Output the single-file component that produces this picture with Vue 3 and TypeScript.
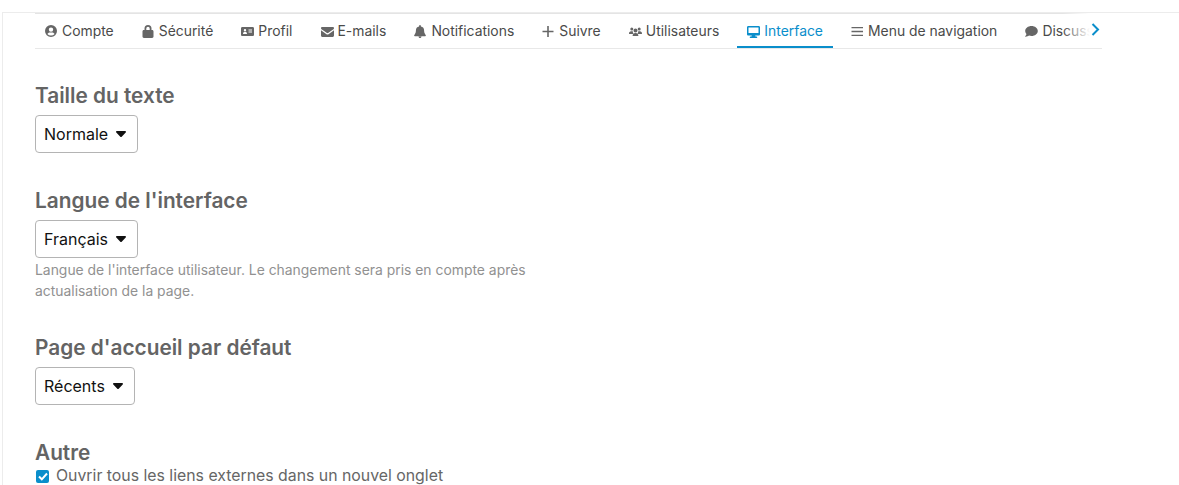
<script setup lang="ts">
const tabs = [
  { label: 'Compte', icon: 'user' },
  { label: 'Sécurité', icon: 'lock' },
  { label: 'Profil', icon: 'card' },
  { label: 'E-mails', icon: 'mail' },
  { label: 'Notifications', icon: 'bell' },
  { label: 'Suivre', icon: 'plus' },
  { label: 'Utilisateurs', icon: 'users' },
  { label: 'Interface', icon: 'desktop', active: true },
  { label: 'Menu de navigation', icon: 'bars' },
  { label: 'Discussions', icon: 'chat' },
]
const icons: Record<string, string> = {
  user: 'M6 0a6 6 0 1 0 0 12A6 6 0 0 0 6 0zm0 2.400a2.200 2.200 0 1 1 0 4.400 2.200 2.200 0 0 1 0-4.400zm0 8.200a4.700 4.700 0 0 1-3.600-1.700c.5-.9 1.400-1.500 2.400-1.500h2.400c1 0 1.900.6 2.400 1.500A4.700 4.700 0 0 1 6 10.600z',
  lock: 'M2.500 5V3.500a3.500 3.500 0 0 1 7 0V5h.6c.8 0 1.400.6 1.400 1.400v5.200c0 .8-.6 1.400-1.400 1.400H1.900C1.100 13 .5 12.400.5 11.600V6.400C.5 5.600 1.100 5 1.900 5h.6zm1.800 0h3.400V3.500a1.700 1.700 0 0 0-3.400 0V5z',
  card: 'M1.300 2h10.400c.7 0 1.300.6 1.300 1.300v6.400c0 .7-.6 1.300-1.300 1.300H1.300C.6 11 0 10.400 0 9.700V3.300C0 2.600.6 2 1.300 2zm2.700 2a1.200 1.200 0 1 0 0 2.400A1.200 1.200 0 0 0 4 4zM2 8.600c0 .2.100.4.300.4h3.400c.2 0 .3-.2.300-.4 0-.8-.7-1.500-1.500-1.500h-1C2.700 7.100 2 7.800 2 8.600zM7.500 4.500v1H11v-1H7.500zm0 2v1H11v-1H7.500z',
  mail: 'M1.200 2h10.600C12.500 2 13 2.500 13 3.200c0 .4-.2.800-.5 1L7 8.100c-.3.200-.7.200-1 0L.5 4.200C.2 4 0 3.600 0 3.200 0 2.500.5 2 1.200 2zM0 5.300l5.500 3.900c.6.400 1.400.400 2 0L13 5.300v5.200c0 .8-.7 1.500-1.500 1.500h-10C.7 12 0 11.300 0 10.500V5.300z',
  bell: 'M6 0c.5 0 .9.400.9.900v.6a4 4 0 0 1 3.200 3.900v.7c0 1.300.4 2.500 1.200 3.500l.4.500c.2.200.2.500.1.700-.1.300-.3.400-.6.400H.8c-.3 0-.5-.1-.6-.4-.1-.2-.1-.5.100-.7l.4-.5c.8-1 1.200-2.200 1.200-3.500v-.7A4 4 0 0 1 5.100 1.500V.9c0-.5.400-.9.900-.9zM4.500 11.500h3c0 .8-.7 1.500-1.500 1.500s-1.500-.7-1.500-1.500z',
  plus: 'M5.200 1h1.600v4.700h4.700v1.600H6.800V12H5.200V7.300H.5V5.700h4.700z',
  users: 'M2.800 2.500a1.500 1.500 0 1 1 0 3 1.500 1.500 0 0 1 0-3zm7.400 0a1.500 1.500 0 1 1 0 3 1.500 1.500 0 0 1 0-3zM6.500 3.500a2 2 0 1 1 0 4 2 2 0 0 1 0-4zM0 8.400C0 7.300.9 6.300 2.100 6.300h1c.3 0 .6.100.8.200A3 3 0 0 0 4.600 9H.4C.2 9 0 8.800 0 8.400zm8.400.6a3 3 0 0 0 .7-2.500c.3-.1.500-.2.800-.2h1c1.200 0 2.100 1 2.100 2.100 0 .4-.2.600-.4.600H8.400zM3.600 10.700C3.600 9.200 4.800 8 6.200 8h.6c1.400 0 2.600 1.200 2.600 2.700 0 .2-.2.300-.4.300H4c-.2 0-.4-.1-.4-.3z',
  desktop: 'M1.300 1h10.400C12.400 1 13 1.600 13 2.300v6.900c0 .7-.6 1.300-1.300 1.300H8.200l.3 1.100h1.100a.7.700 0 1 1 0 1.400H3.400a.7.700 0 1 1 0-1.400h1.100l.3-1.100H1.300C.6 10.500 0 9.900 0 9.200V2.300C0 1.600.6 1 1.300 1zm.2 1.500V8h10V2.500h-10z',
  bars: 'M.5 2h11.500v1.300H.5zM.5 5.850h11.500v1.300H.5zM.5 9.700h11.500V11H.5z',
  chat: 'M6.500 1c3.500 0 6.300 2.200 6.300 5s-2.800 5-6.300 5c-.9 0-1.700-.1-2.500-.4-.9.700-2 1.200-3.500 1.200-.2 0-.3-.1-.4-.2 0-.2 0-.3.100-.4.500-.5 1.100-1.200 1.300-2.100C.9 8.200.200 7.200.200 6 .2 3.200 3 1 6.500 1z',
}
</script>

<template>
  <div class="page">
    <div class="tabs-wrap">
      <nav class="tabs">
        <a v-for="t in tabs" :key="t.label" class="tab" :class="{ active: t.active }">
          <svg class="ico" width="13" height="13" viewBox="0 0 13 13" fill="currentColor"><path :d="icons[t.icon]" /></svg>
          <span>{{ t.label }}</span>
        </a>
      </nav>
      <div class="fade"></div>
      <svg class="chevron" width="9" height="13" viewBox="0 0 9 13" fill="none" stroke="#0a8ecb" stroke-width="2"><path d="M1.500 1l5.500 5.500-5.500 5.500" /></svg>
    </div>

    <section class="group first">
      <h2>Taille du texte</h2>
      <button class="select">Normale<svg class="caret" width="10" height="6" viewBox="0 0 10 6"><path d="M1 0h8c.8 0 1.300 1 .7 1.600L5.700 5.700c-.4.400-1 .4-1.400 0L.3 1.600C-.3 1 .2 0 1 0z" /></svg></button>
    </section>
    <section class="group">
      <h2>Langue de l'interface</h2>
      <button class="select">Français<svg class="caret" width="10" height="6" viewBox="0 0 10 6"><path d="M1 0h8c.8 0 1.300 1 .7 1.600L5.700 5.700c-.4.400-1 .4-1.400 0L.3 1.600C-.3 1 .2 0 1 0z" /></svg></button>
      <p class="hint">Langue de l'interface utilisateur. Le changement sera pris en compte après actualisation de la page.</p>
    </section>
    <section class="group third">
      <h2>Page d'accueil par défaut</h2>
      <button class="select narrow">Récents<svg class="caret" width="10" height="6" viewBox="0 0 10 6"><path d="M1 0h8c.8 0 1.300 1 .7 1.600L5.700 5.700c-.4.400-1 .4-1.400 0L.3 1.600C-.3 1 .2 0 1 0z" /></svg></button>
    </section>
    <section class="group last">
      <h2>Autre</h2>
      <label class="check">
        <span class="box"><svg width="10" height="9" viewBox="0 0 10 9" fill="none" stroke="#fff" stroke-width="2"><path d="M1 4.500l2.800 2.800L9 1.500" /></svg></span>
        Ouvrir tous les liens externes dans un nouvel onglet
      </label>
    </section>
  </div>
</template>

<style>
html, body { margin: 0; background: #fff; overflow: hidden; }
</style>

<style scoped>
.page {
  box-sizing: border-box;
  height: 473px;
  margin: 12px 0 0 2px;
  padding: 0 77px 0 32px;
  border-top: 1px solid #ececec;
  border-left: 1px solid #ececec;
  font-family: Inter, sans-serif;
  overflow: hidden;
}
.tabs-wrap { position: relative; }
.tabs {
  display: flex;
  height: 34px;
  overflow: hidden;
  border-top: 1px solid #e4e4e4;
  border-bottom: 1px solid #e8e8e8;
}
.tab {
  flex: none;
  display: flex;
  align-items: center;
  gap: 4px;
  height: 34px;
  padding: 0 10px;
  margin-right: 8.100px;
  box-sizing: border-box;
  font-size: 13.900px;
  color: #4a4a4a;
  white-space: nowrap;
}
.tab .ico { color: #666; overflow: visible; }
.tab.active { color: #0a8ecb; border-bottom: 2px solid #0a8ecb; padding-top: 2px; }
.tab.active .ico { color: #0a8ecb; }
.fade {
  position: absolute;
  right: 0;
  top: 0;
  width: 40px;
  height: 30px;
  background: linear-gradient(to right, rgba(255,255,255,0), #fff 70%);
}
.chevron { position: absolute; right: 2px; top: 10px; }
.group { margin-top: 36px; }
.group.first { margin-top: 35px; }
.group.third { margin-top: 34px; }
.group h2 {
  margin: 0 0 7px;
  font-size: 20.800px;
  line-height: 24px;
  font-weight: 600;
  color: #646464;
}
.select {
  display: flex;
  align-items: center;
  width: 103px;
  height: 38px;
  padding: 0 8px;
  box-sizing: border-box;
  background: #fff;
  border: 1px solid #b4b4b4;
  border-radius: 4px;
  font: 16px Inter, sans-serif;
  color: #111;
}
.select.narrow { width: 100px; }
.caret {
  margin-left: 8px;
  fill: #111;
}
.hint {
  margin: 2px 0 0;
  width: 530px;
  font-size: 13.900px;
  line-height: 21px;
  color: #919191;
}
.group.last h2 { margin-bottom: 0; }
.group.last { margin-top: 36px; }
.check {
  display: flex;
  align-items: center;
  gap: 7px;
  font-size: 15.840px;
  line-height: 22px;
  color: #666;
}
.box {
  display: flex;
  align-items: center;
  justify-content: center;
  margin-left: 1px;
  width: 13px;
  height: 13px;
  border-radius: 2px;
  background: #0a8ecb;
}
</style>
